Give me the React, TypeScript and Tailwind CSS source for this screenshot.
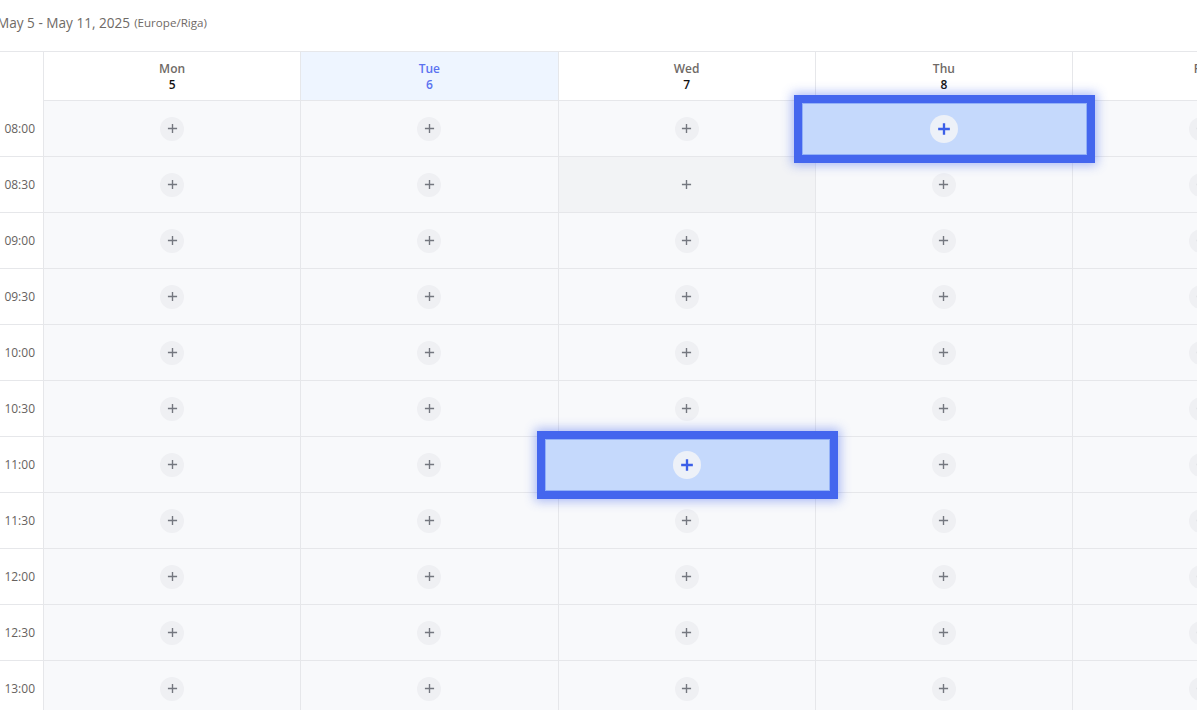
import React from "react";

const days = [
  { name: "Mon", num: 5 },
  { name: "Tue", num: 6, today: true },
  { name: "Wed", num: 7 },
  { name: "Thu", num: 8 },
  { name: "Fri", num: 9 },
  { name: "Sat", num: 10 },
  { name: "Sun", num: 11 },
];

const times = ["08:00", "08:30", "09:00", "09:30", "10:00", "10:30", "11:00", "11:30", "12:00", "12:30", "13:00", "13:30"];

function Plus({ size, color, width }: { size: number; color: string; width: number }) {
  return (
    <svg width={size} height={size} viewBox="0 0 12 12" fill="none">
      <path d="M6 1v10M1 6h10" stroke={color} strokeWidth={width} strokeLinecap="butt" />
    </svg>
  );
}

function Cell({ day, row }: { day: number; row: number }) {
  const hovered = day === 2 && row === 1;
  const selected = (day === 3 && row === 0) || (day === 2 && row === 6);
  return (
    <div
      className={`relative h-[56px] border-r border-b border-[#e6e7ea] flex items-center justify-center ${
        hovered ? "bg-[#f2f3f5]" : "bg-[#f8f9fb]"
      } ${selected ? "z-10" : ""}`}
    >
      <div className={`w-6 h-6 rounded-full flex items-center justify-center ${hovered ? "bg-[#f2f3f5]" : "bg-[#eff0f3]"}`}>
        <Plus size={11} color="#74777f" width={1.5} />
      </div>
      {selected && (
        <div className="absolute -left-[22px] -right-[23px] -top-[6px] -bottom-[7px] border-[8px] border-[#4466ee] bg-[#c5d9fc] shadow-[0_0_10px_2px_rgba(68,102,238,0.45)] flex items-center justify-center">
          <div className="absolute inset-0 border border-[#93b1f7]" />
          <div className="relative w-7 h-7 rounded-full bg-[#edf1f8] flex items-center justify-center">
            <Plus size={14} color="#3b5fe8" width={2} />
          </div>
        </div>
      )}
    </div>
  );
}

export default function App() {
  return (
    <div className="w-[1197px] h-[710px] overflow-hidden bg-white" style={{ fontFamily: '"Open Sans", "Noto Sans", sans-serif' }}>
      <div className="h-[51px] flex items-center -ml-[3px] pb-[5px]">
        <span className="text-[13.6px] text-[#6f6a66]">May 5 - May 11, 2025</span>
        <span className="text-[11.6px] text-[#6f6a66] ml-1">(Europe/Riga)</span>
      </div>
      <div className="grid grid-cols-[44px_repeat(7,257.25px)] border-t border-[#e6e7ea] w-max">
        <div className="h-[49px] border-r border-[#e6e7ea] bg-white" />
        {days.map((d) => (
          <div
            key={d.name}
            className={`h-[49px] border-r border-b border-[#e6e7ea] flex flex-col items-center justify-center pt-[2px] text-xs font-semibold leading-4 ${
              d.today ? "bg-[#eef5ff]" : "bg-white"
            }`}
          >
            <span className={d.today ? "text-[#5b72f0]" : "text-[#6f6a66]"}>{d.name}</span>
            <span className={d.today ? "text-[#5b72f0]" : "text-[#111111]"}>{d.num}</span>
          </div>
        ))}
        {times.map((t, r) => (
          <React.Fragment key={t}>
            <div className="h-[56px] border-r border-b border-[#e6e7ea] bg-white flex items-center justify-end pr-[8px] pt-[1px] text-xs text-[#66625e]">
              {t}
            </div>
            {days.map((d, di) => (
              <Cell key={d.name} day={di} row={r} />
            ))}
          </React.Fragment>
        ))}
      </div>
    </div>
  );
}
